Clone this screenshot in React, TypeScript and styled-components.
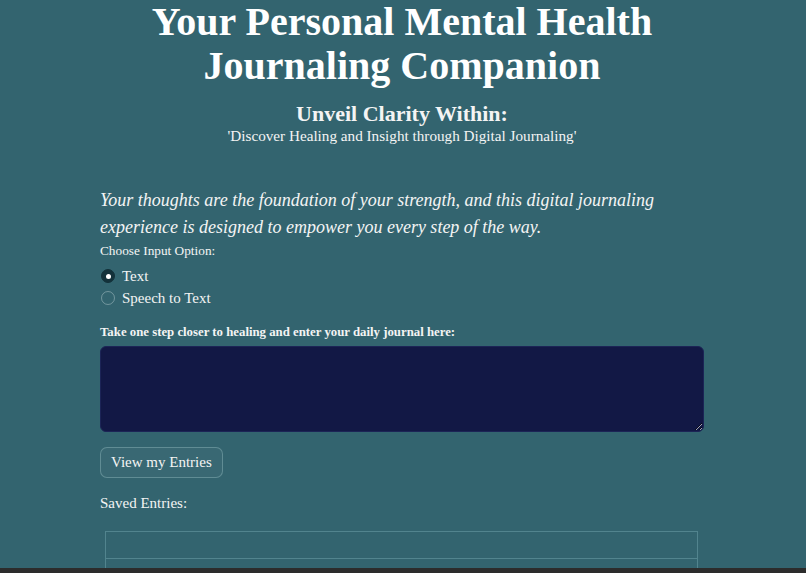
import styled, { createGlobalStyle } from "styled-components";

const GlobalStyle = createGlobalStyle`
  html, body {
    margin: 0;
    padding: 0;
    background: #33646f;
    overflow: hidden;
  }
  body {
    font-family: "Liberation Serif", "DejaVu Serif", serif;
    color: #f4f4f4;
  }
`;

const Page = styled.div`
  height: 568px;
  display: flex;
  justify-content: center;
  align-items: flex-start;
  padding-right: 2px;
  overflow: hidden;
`;

const Main = styled.main`
  width: 604px;
  display: flex;
  flex-direction: column;
`;

const Title = styled.h1`
  margin: 0;
  text-align: center;
  font-size: 40px;
  line-height: 44px;
  font-weight: 700;
  color: #ffffff;
`;

const Subtitle = styled.h3`
  margin: 12px 0 0;
  text-align: center;
  font-size: 22px;
  line-height: 27px;
  font-weight: 600;
`;

const Tagline = styled.p`
  margin: 0;
  text-align: center;
  font-size: 15.2px;
  line-height: 18px;
`;

const Intro = styled.p`
  margin: 42px 0 0;
  font-style: italic;
  font-size: 18px;
  line-height: 27px;
`;

const FieldLabel = styled.div<{ $bold?: boolean }>`
  margin-top: ${({ $bold }) => ($bold ? "0" : "1px")};
  font-size: ${({ $bold }) => ($bold ? "12.8px" : "13.3px")};
  line-height: 18px;
  font-weight: ${({ $bold }) => ($bold ? 700 : 400)};
`;

const RadioGroup = styled.div`
  display: flex;
  flex-direction: column;
  gap: 4px;
  margin-top: 7px;
  margin-bottom: 16px;
`;

const RadioRow = styled.label`
  display: flex;
  align-items: center;
  gap: 7px;
  height: 18px;
  font-size: 15px;
  line-height: 18px;
`;

const Dot = styled.span<{ $on?: boolean }>`
  width: 14px;
  height: 14px;
  box-sizing: border-box;
  border-radius: 50%;
  margin-left: 1px;
  background: ${({ $on }) => ($on ? "#13313a" : "transparent")};
  border: 1px solid ${({ $on }) => ($on ? "#13313a" : "rgba(230,240,240,0.35)")};
  display: flex;
  align-items: center;
  justify-content: center;
  &::after {
    content: "";
    display: ${({ $on }) => ($on ? "block" : "none")};
    width: 5px;
    height: 5px;
    border-radius: 50%;
    background: #ffffff;
  }
`;

const Journal = styled.textarea`
  margin-top: 5px;
  height: 86px;
  box-sizing: border-box;
  background: #121845;
  border: 1px solid #1c2456;
  border-radius: 6px;
  color: #fff;
  font-family: inherit;
  resize: vertical;
  outline: none;
`;

const Button = styled.button`
  align-self: flex-start;
  margin-top: 15px;
  height: 31px;
  padding: 0 10px;
  background: rgba(255, 255, 255, 0.03);
  border: 1px solid rgba(170, 205, 210, 0.35);
  border-radius: 7px;
  color: #f4f4f4;
  font-family: inherit;
  font-size: 15px;
`;

const Saved = styled.div`
  margin-top: 16px;
  font-size: 15px;
  line-height: 18px;
`;

const Table = styled.div`
  margin: 19px 6px 0 5px;
  border: 1px solid rgba(120, 170, 180, 0.45);
  border-bottom: none;
  height: 60px;
`;

const Row = styled.div`
  height: 26px;
  border-bottom: 1px solid rgba(120, 170, 180, 0.45);
`;

const BottomBar = styled.div`
  height: 5px;
  background: #2c2c2c;
`;

export default function App() {
  return (
    <>
      <GlobalStyle />
      <Page>
        <Main>
          <Title>
            Your Personal Mental Health
            <br />
            Journaling Companion
          </Title>
          <Subtitle>Unveil Clarity Within:</Subtitle>
          <Tagline>'Discover Healing and Insight through Digital Journaling'</Tagline>
          <Intro>
            Your thoughts are the foundation of your strength, and this digital journaling
            experience is designed to empower you every step of the way.
          </Intro>
          <FieldLabel>Choose Input Option:</FieldLabel>
          <RadioGroup>
            <RadioRow>
              <Dot $on />
              Text
            </RadioRow>
            <RadioRow>
              <Dot />
              Speech to Text
            </RadioRow>
          </RadioGroup>
          <FieldLabel $bold>Take one step closer to healing and enter your daily journal here:</FieldLabel>
          <Journal />
          <Button>View my Entries</Button>
          <Saved>Saved Entries:</Saved>
          <Table>
            <Row />
          </Table>
        </Main>
      </Page>
      <BottomBar />
    </>
  );
}
